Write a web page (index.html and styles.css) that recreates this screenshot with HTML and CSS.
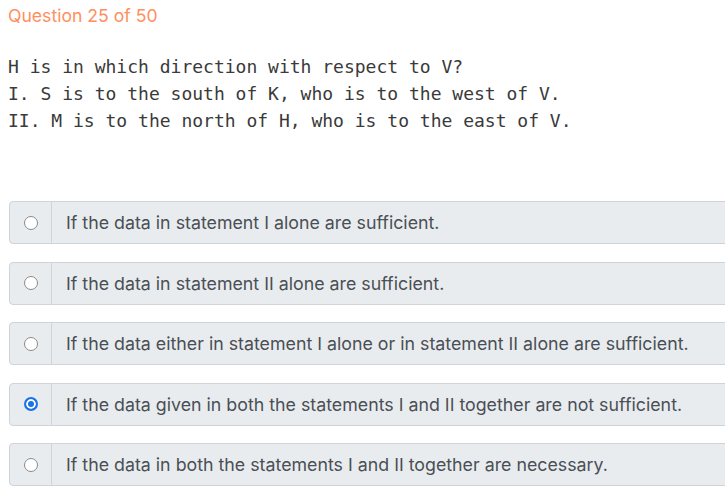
FILE: index.html
```html
<!DOCTYPE html>
<html>
<head>
<meta charset="utf-8">
<link rel="stylesheet" href="styles.css">
</head>
<body>
<div class="page">
  <div class="qnum">Question 25 of 50</div>
  <pre class="qtext">H is in which direction with respect to V?
I. S is to the south of K, who is to the west of V.
II. M is to the north of H, who is to the east of V.</pre>
  <div class="options">
    <label class="opt"><span class="radio-cell"><span class="radio"></span></span><span class="opt-text">If the data in statement I alone are sufficient.</span></label>
    <label class="opt"><span class="radio-cell"><span class="radio"></span></span><span class="opt-text">If the data in statement II alone are sufficient.</span></label>
    <label class="opt"><span class="radio-cell"><span class="radio"></span></span><span class="opt-text">If the data either in statement I alone or in statement II alone are sufficient.</span></label>
    <label class="opt"><span class="radio-cell"><span class="radio checked"></span></span><span class="opt-text">If the data given in both the statements I and II together are not sufficient.</span></label>
    <label class="opt"><span class="radio-cell"><span class="radio"></span></span><span class="opt-text">If the data in both the statements I and II together are necessary.</span></label>
  </div>
</div>
</body>
</html>
```
FILE: styles.css
```css
html, body { margin: 0; padding: 0; background: #fff; }
body { overflow: hidden; width: 725px; height: 497px; }
.page { padding: 5px 0 0 8px; width: 717px; overflow: hidden; }
.qnum {
  font-family: Inter, "Noto Sans", sans-serif;
  font-size: 17.6px;
  color: #ff8f5e;
  line-height: 22px;
}
.qtext {
  margin: 26px 0 0 0;
  font-family: "DejaVu Sans Mono", monospace;
  font-size: 18px;
  line-height: 27px;
  color: #3a3a3a;
}
.options { margin-top: 67px; margin-left: 1px; margin-right: -20px; display: flex; flex-direction: column; gap: 17.5px; }
.opt {
  display: flex;
  height: 41px;
  border: 1px solid #ced4da;
  border-radius: 4px;
  background: #e9ecef;
  font-family: Inter, "Noto Sans", sans-serif;
  font-size: 17.8px;
  color: #4a4f55;
}
.radio-cell {
  width: 41px;
  border-right: 1px solid #ced4da;
  display: flex; align-items: center; justify-content: center;
}
.radio {
  width: 12px; height: 12px;
  border: 1px solid #8a8a8a;
  border-radius: 50%;
  background: #fff;
}
.radio.checked {
  border: 2px solid #1a73e8;
  width: 10px; height: 10px;
  background: #1a73e8;
  box-shadow: inset 0 0 0 2px #fff;
}
.opt-text { display: flex; align-items: center; padding-left: 14px; }
```
